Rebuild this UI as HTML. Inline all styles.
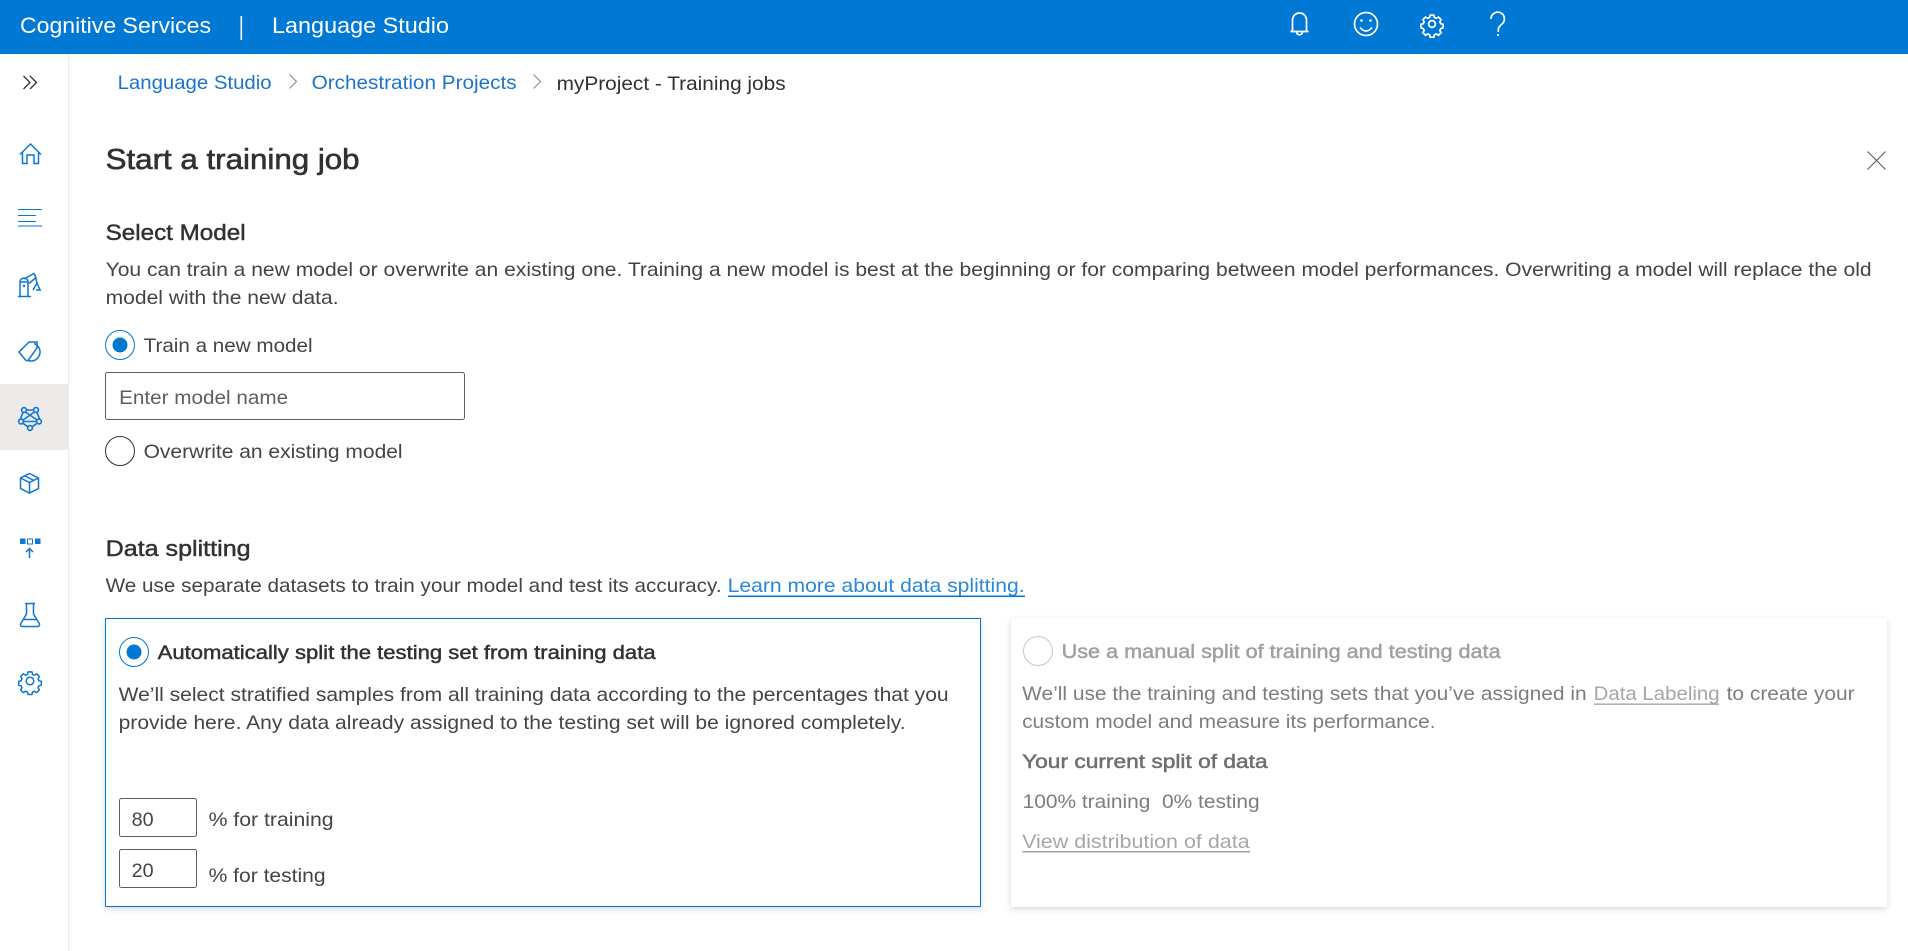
<!DOCTYPE html>
<html><head><meta charset="utf-8"><title>Start a training job</title>
<style>
html,body{margin:0;padding:0;background:#fff;width:1908px;height:951px;overflow:hidden}
svg{display:block}
text{font-family:"Liberation Sans",sans-serif;font-size:19.5px;fill:#444;white-space:pre;transform:translate(-.4px,-.8px)}
.h{font-size:22.5px;fill:#fff;transform:none}
.b{font-size:19.5px;fill:#1a74c9}
.s{stroke:#323130;stroke-width:.45px;fill:#323130}
.g{fill:#7d7d7d}
.i{fill:none;stroke:#0f76d2;stroke-width:1.5}
.w{fill:none;stroke:#fff;stroke-width:1.7}
.n{vector-effect:non-scaling-stroke}
</style></head><body>
<svg width="1908" height="951" viewBox="0 0 1908 951" xmlns="http://www.w3.org/2000/svg">
<defs><filter id="sh" x="-5%" y="-5%" width="110%" height="112%"><feDropShadow dx="0" dy="2" stdDeviation="3" flood-color="#000" flood-opacity=".16"/></filter></defs>
<rect width="1908" height="951" fill="#fff"/>
<!-- header -->
<rect width="1908" height="54" fill="#0078d4"/>
<text class="h" x="20" y="33" textLength="191" lengthAdjust="spacingAndGlyphs">Cognitive Services</text>
<rect x="240.5" y="16" width="1.6" height="24" fill="#fff"/>
<text class="h" x="272" y="33" textLength="177" lengthAdjust="spacingAndGlyphs">Language Studio</text>
<!-- header icons -->
<path class="w" d="M1292.500 31V20a7 7 0 0 1 14 0V31M1290.500 31.500h18M1296.500 32a3 2.800 0 0 0 6 0"/>
<circle class="w" cx="1366" cy="24" r="11.500"/>
<circle cx="1361.500" cy="20.500" r="1.300" fill="#fff"/><circle cx="1370.500" cy="20.500" r="1.300" fill="#fff"/>
<path class="w" d="M1360 27.500q6 7 12 0"/>
<g transform="translate(1432 24)">
<path class="w n" d="M-2.500-12h5l.8 3.200 2.600 1.100 2.900-1.700 3.500 3.500-1.700 2.900 1.100 2.600 3.200.8v5l-3.200.8-1.100 2.600 1.700 2.900-3.500 3.500-2.900-1.700-2.600 1.100-.8 3.200h-5l-.8-3.200-2.600-1.100-2.900 1.700-3.500-3.500 1.700-2.900-1.100-2.600-3.200-.8v-5l3.200-.8 1.100-2.600-1.700-2.900 3.500-3.500 2.900 1.700 2.600-1.100z" transform="scale(.74)"/>
<circle class="w" r="3.400"/>
</g>
<path class="w" d="M1491 19a6.700 6.700 0 1 1 11 5c-2.500 2-3.700 3.200-3.700 6.200V32"/>
<circle cx="1498" cy="35" r="1.100" fill="#fff"/>
<!-- sidebar -->
<rect x="68" y="54" width="1" height="897" fill="#edebe9"/>
<rect x="0" y="384" width="68" height="66" fill="#edebe9"/>
<path d="M23.500 76l6.500 6.500-6.500 6.500M30 76l6.500 6.500-6.500 6.500" fill="none" stroke="#323130" stroke-width="1.300"/>
<!-- home -->
<path class="i" d="M20 154.500L30.500 144 41 154.500M22.500 152.500V163.500H27V155H34V163.500H38.500V152.500"/>
<!-- lines -->
<path class="i" d="M18 209.500H42M18 215.500H36M18 221.500H36M18 226H42" style="stroke-width:1.100"/>
<!-- robot arm -->
<path class="i" d="M18 296.500H31M20 296V282h8v14M20 283l0-1a4 4 0 0 1 8 0M24 279l10-5.500 2 4-7 6M35 275l2 8M33 290l4-7 3 7M36 290h5"/>
<circle cx="24" cy="286" r="1.200" fill="#0f76d2"/>
<!-- tag -->
<path class="i" d="M19 352l10-10h8v6l-9 12.500h-2z"/>
<path class="i" d="M34 343.500a9 9 0 1 1-6 17"/>
<!-- network -->
<g class="i" style="stroke-width:1.600">
<circle cx="24" cy="410" r="2.400"/><circle cx="36" cy="410" r="2.400"/><circle cx="21" cy="421.500" r="2.400"/><circle cx="39" cy="421.500" r="2.400"/><circle cx="30" cy="428" r="2.400"/>
<path d="M26.400 410h7.200M25.500 412L37 420M34.500 412L23 420M23.400 421.500h13.200M22.800 423.200L28 426.800M37.200 423.200L32 426.800M23 412.200L20.500 419M37 412.200L39.500 419"/>
</g>
<!-- cube -->
<path class="i" d="M29.500 473.500L38.500 478V488.500L29.500 493 20.500 488.500V478zM20.500 478L29.500 482.500 38.500 478M29.500 482.500V493M25 476L34 480.500"/>
<!-- squares -->
<rect x="20" y="538.500" width="5.500" height="5.500" fill="#0f76d2"/>
<rect x="27.500" y="539" width="5" height="5" fill="none" stroke="#0f76d2"/>
<rect x="35" y="538.500" width="5.500" height="5.500" fill="#0f76d2"/>
<path class="i" d="M29.500 558V549M26 552l3.500-3.500 3.500 3.500"/>
<!-- flask -->
<path class="i" d="M25 603.500h10M26.500 604V614L20.500 624a2 2 0 0 0 1.500 2.500H38a2 2 0 0 0 1.500-2.500L33.500 614V604M23 619.500H37"/>
<!-- gear -->
<g transform="translate(30 681)">
<path class="i n" d="M-2.500-12h5l.8 3.200 2.600 1.100 2.900-1.700 3.500 3.500-1.700 2.900 1.100 2.600 3.200.8v5l-3.200.8-1.100 2.600 1.700 2.900-3.500 3.500-2.900-1.700-2.600 1.100-.8 3.200h-5l-.8-3.200-2.600-1.100-2.900 1.700-3.500-3.500 1.700-2.900-1.100-2.600-3.200-.8v-5l3.200-.8 1.100-2.600-1.700-2.900 3.500-3.500 2.900 1.700 2.600-1.100z" transform="scale(.76)"/>
<circle class="i" r="3.800"/>
</g>
<!-- breadcrumb -->
<text class="b" x="118" y="90" textLength="154" lengthAdjust="spacingAndGlyphs">Language Studio</text>
<path d="M289.500 74.500l7 7-7 7" fill="none" stroke="#8a8886" stroke-width="1.100"/>
<text class="b" x="312" y="90" textLength="205" lengthAdjust="spacingAndGlyphs">Orchestration Projects</text>
<path d="M533.500 74.500l7 7-7 7" fill="none" stroke="#8a8886" stroke-width="1.100"/>
<text x="557" y="91" textLength="229" lengthAdjust="spacingAndGlyphs" style="fill:#323130">myProject - Training jobs</text>
<!-- title -->
<text x="106" y="169.800" textLength="254" lengthAdjust="spacingAndGlyphs" class="s" style="font-size:28.5px;stroke-width:.6px">Start a training job</text>
<path d="M1867.500 151.500l18 18M1885.500 151.500l-18 18" fill="none" stroke="#605e5c" stroke-width="1.100"/>
<!-- select model -->
<text x="106" y="241" textLength="140" lengthAdjust="spacingAndGlyphs" class="s" style="font-size:22.500px">Select Model</text>
<text x="106" y="277" textLength="1766" lengthAdjust="spacingAndGlyphs">You can train a new model or overwrite an existing one. Training a new model is best at the beginning or for comparing between model performances. Overwriting a model will replace the old</text>
<text x="106" y="305" textLength="233" lengthAdjust="spacingAndGlyphs">model with the new data.</text>
<circle cx="120" cy="345" r="14.500" fill="#fff" stroke="#0078d4" stroke-width="1"/>
<circle cx="120" cy="345" r="7.500" fill="#0078d4"/>
<text x="144" y="353" textLength="169" lengthAdjust="spacingAndGlyphs">Train a new model</text>
<rect x="105.500" y="372.500" width="359" height="47" rx="2" fill="#fff" stroke="#605e5c"/>
<text x="119.500" y="405" textLength="169" lengthAdjust="spacingAndGlyphs" style="fill:#605e5c">Enter model name</text>
<circle cx="120" cy="451" r="14.500" fill="#fff" stroke="#323130"/>
<text x="144" y="459" textLength="259" lengthAdjust="spacingAndGlyphs">Overwrite an existing model</text>
<!-- data splitting -->
<text x="106" y="557" textLength="145" lengthAdjust="spacingAndGlyphs" class="s" style="font-size:22.500px">Data splitting</text>
<text x="106" y="593" textLength="616" lengthAdjust="spacingAndGlyphs">We use separate datasets to train your model and test its accuracy.</text>
<text x="728" y="593" textLength="297" lengthAdjust="spacingAndGlyphs" style="fill:#2b88d8">Learn more about data splitting.</text>
<rect x="728" y="595.500" width="297" height="1.500" fill="#0078d4"/>
<!-- card 1 -->
<rect x="105.500" y="618.500" width="875" height="288" fill="#fff" stroke="#0078d4" filter="url(#sh)"/>
<circle cx="134" cy="652" r="14.500" fill="#fff" stroke="#0078d4"/>
<circle cx="134" cy="652" r="7.500" fill="#0078d4"/>
<text x="158" y="660" textLength="498" lengthAdjust="spacingAndGlyphs" class="s">Automatically split the testing set from training data</text>
<text x="119" y="702" textLength="830" lengthAdjust="spacingAndGlyphs">We’ll select stratified samples from all training data according to the percentages that you</text>
<text x="119" y="730" textLength="787" lengthAdjust="spacingAndGlyphs">provide here. Any data already assigned to the testing set will be ignored completely.</text>
<rect x="119.500" y="798.500" width="77" height="38" rx="2" fill="#fff" stroke="#605e5c"/>
<text x="132" y="827" textLength="22" lengthAdjust="spacingAndGlyphs">80</text>
<text x="209" y="827" textLength="125" lengthAdjust="spacingAndGlyphs">% for training</text>
<rect x="119.500" y="849.500" width="77" height="38" rx="2" fill="#fff" stroke="#605e5c"/>
<text x="132" y="878" textLength="22" lengthAdjust="spacingAndGlyphs">20</text>
<text x="209" y="883" textLength="117" lengthAdjust="spacingAndGlyphs">% for testing</text>
<!-- card 2 -->
<rect x="1011" y="618" width="876" height="289" fill="#fff" filter="url(#sh)"/>
<circle cx="1038" cy="651" r="14.500" fill="#fff" stroke="#c8c6c4"/>
<text x="1062" y="659" textLength="439" lengthAdjust="spacingAndGlyphs" style="fill:#a19f9d;stroke:#a19f9d;stroke-width:.45px">Use a manual split of training and testing data</text>
<text class="g" x="1022.500" y="701" textLength="564.500" lengthAdjust="spacingAndGlyphs">We’ll use the training and testing sets that you’ve assigned in</text>
<text x="1594" y="701" textLength="126" lengthAdjust="spacingAndGlyphs" style="fill:#a6a6a6">Data Labeling</text>
<rect x="1594" y="703.500" width="125" height="1.300" fill="#a0a0a0"/>
<text class="g" x="1727" y="701" textLength="128" lengthAdjust="spacingAndGlyphs">to create your</text>
<text class="g" x="1022.500" y="729" textLength="413.500" lengthAdjust="spacingAndGlyphs">custom model and measure its performance.</text>
<text x="1022.500" y="769" textLength="245.500" lengthAdjust="spacingAndGlyphs" style="fill:#6f6f6f;stroke:#6f6f6f;stroke-width:.5px">Your current split of data</text>
<text class="g" x="1023" y="809" textLength="237" lengthAdjust="spacingAndGlyphs">100% training  0% testing</text>
<text x="1022.500" y="849" textLength="227.500" lengthAdjust="spacingAndGlyphs" style="fill:#a6a6a6">View distribution of data</text>
<rect x="1022.500" y="851" width="227.500" height="1.500" fill="#a0a0a0"/>
</svg>
</body></html>
